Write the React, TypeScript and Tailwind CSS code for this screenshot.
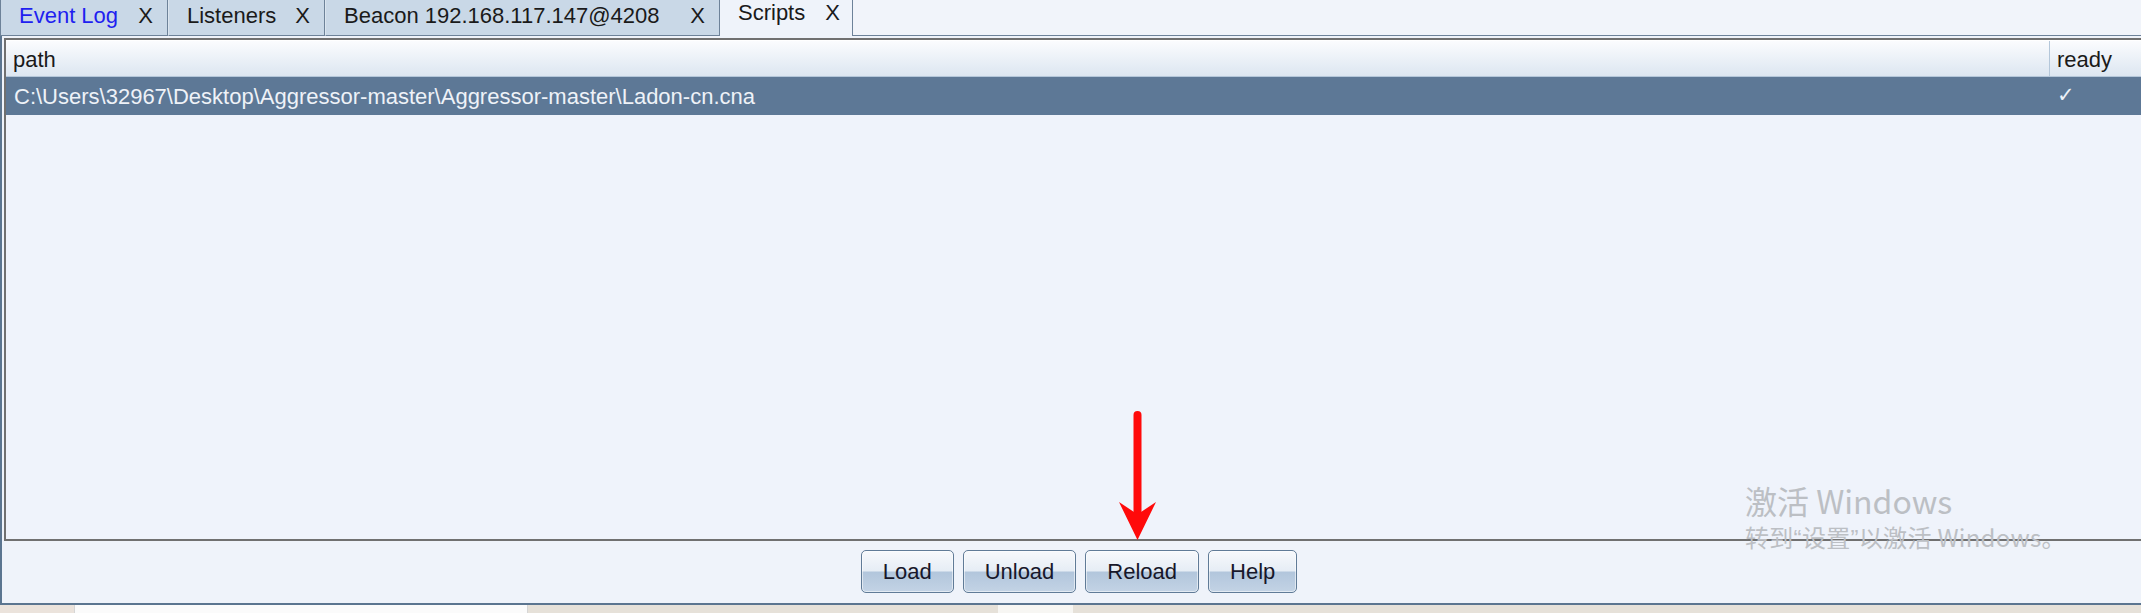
import React from "react";

const tabs = [
  { label: "Event Log", active: false, blue: true, w: "w-[168px]" },
  { label: "Listeners", active: false, blue: false, w: "w-[157px]" },
  { label: "Beacon 192.168.117.147@4208", active: false, blue: false, w: "w-[395px]" },
  { label: "Scripts", active: true, blue: false, w: "w-[133px]" },
];

const buttons = ["Load", "Unload", "Reload", "Help"];

const App = () => {
  return (
    <div className="relative flex h-[613px] w-[2141px] flex-col overflow-hidden bg-[#eff3fa] font-['Liberation_Sans',Arial,sans-serif] text-[22px] text-[#1a1a1a]">
      {/* tab strip */}
      <div className="flex h-[36px] shrink-0">
        {tabs.map((t) =>
          t.active ? (
            <div
              key={t.label}
              className={`${t.w} flex h-full items-start justify-between border-r border-[#6d8299] bg-[#eff3fa] pl-[18px] pr-[12px] pt-[1px] leading-[24px]`}
            >
              <span>{t.label}</span>
              <span>X</span>
            </div>
          ) : (
            <div
              key={t.label}
              className={`${t.w} flex h-full items-start justify-between border-b border-l border-r border-b-[#6d8299] border-l-[#dbe5ef] border-r-[#6d8299] bg-[#c9d8e7] pl-[18px] pr-[14px] pt-[3px] leading-[25px] first:border-l-[#6d8299]`}
            >
              <span className={t.blue ? "text-[#1f1ff0]" : ""}>{t.label}</span>
              <span>X</span>
            </div>
          )
        )}
        <div className="flex-1 border-b border-[#6d8299] bg-[#f1f4fa]" />
      </div>

      {/* content panel */}
      <div className="flex flex-1 flex-col border-b-2 border-l-2 border-[#5b7590] pl-[2px] pt-[2px]">
        <div className="flex h-[503px] flex-col border-b-2 border-l-2 border-t-2 border-[#707070] bg-[#eff3fb]">
          {/* header */}
          <div className="flex h-[37px] shrink-0 border-b border-t border-b-[#b4c7da] border-t-white bg-[linear-gradient(to_bottom,#fbfcfe,#dce6f1)]">
            <div className="flex flex-1 items-center pl-[7px] pt-[2px]">path</div>
            <div className="flex w-[92px] items-center border-l border-[#b4c7da] pl-[7px] pt-[2px]">ready</div>
          </div>
          {/* selected row */}
          <div className="flex h-[38px] shrink-0 bg-[#5d7896] text-[#eef2f8]">
            <div className="flex flex-1 items-center pl-[8px]">
              C:\Users\32967\Desktop\Aggressor-master\Aggressor-master\Ladon-cn.cna
            </div>
            <div className="flex w-[92px] items-center pl-[8px] font-['DejaVu_Sans',sans-serif] text-[21px] font-bold">✓</div>
          </div>
          <div className="flex-1" />
        </div>

        {/* buttons */}
        <div className="flex justify-center gap-[9px] pb-[10px] pl-[13px] pt-[9px]">
          {buttons.map((b) => (
            <button
              key={b}
              className="h-[43px] rounded-[5px] border border-[#607b97] bg-[linear-gradient(to_bottom,#f7f9fc_0%,#e6edf5_48%,#b2c6dc_52%,#c3d3e5_100%)] px-[21px] text-[22px] text-[#17172a] shadow-[inset_0_0_0_1px_rgba(255,255,255,0.55)]"
            >
              {b}
            </button>
          ))}
        </div>
      </div>

      {/* strip of what lies below */}
      <div className="flex h-[8px] shrink-0 bg-[#e6e1d9]">
        <div className="w-[74px] bg-[#ebe3dc]" />
        <div className="w-[454px] border-l border-r border-[#d6d6d6] bg-[#fbfbfb]" />
        <div className="w-[470px]" />
        <div className="w-[75px] bg-[#f7f6f3]" />
      </div>

      {/* red arrow annotation */}
      <svg
        className="absolute left-[1115px] top-[408px]"
        width="46"
        height="134"
        viewBox="0 0 46 134"
      >
        <line x1="22.5" y1="7" x2="22.5" y2="104" stroke="#ff0a0a" strokeWidth="8" strokeLinecap="round" />
        <polygon points="4,94 19,104 26,104 41,94 22.5,132" fill="#ff0a0a" />
      </svg>

      {/* activation watermark */}
      <div className="pointer-events-none absolute left-[1745px] top-[480px] font-['Noto_Sans_CJK_SC','Noto_Sans',sans-serif] text-[#bcbfc4]">
        <div className="text-[32px] leading-[40px]">激活 Windows</div>
        <div className="text-[24px] leading-[34px] tracking-[0.3px]">
          转到<span className="font-['Liberation_Sans',sans-serif]">“</span>设置<span className="font-['Liberation_Sans',sans-serif]">”</span>以激活 Windows。
        </div>
      </div>
    </div>
  );
};

export default App;
